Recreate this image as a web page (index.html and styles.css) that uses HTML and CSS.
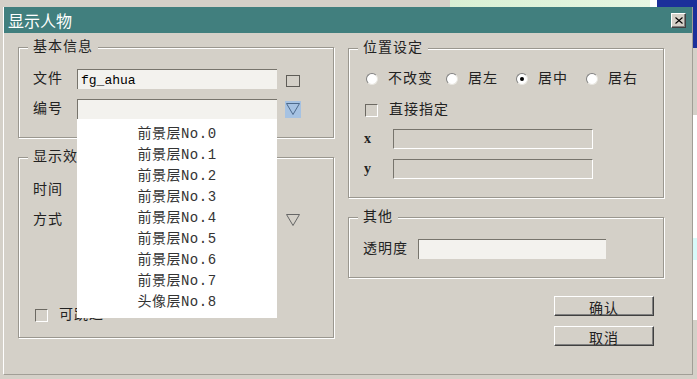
FILE: index.html
```html
<!DOCTYPE html>
<html lang="zh-CN">
<head>
    <meta charset="UTF-8">
    <meta name="viewport" content="width=device-width, initial-scale=1.0">
    <title>显示人物</title>
    <link rel="stylesheet" href="styles.css">
</head>
<body>
    <div class="desk-top"></div>
    <div class="desk-right"></div>

    <div class="dialog">
        <div class="titlebar">
            <span class="title">显示人物</span>
            <button class="close">
                <svg width="8" height="7" viewBox="0 0 8 7"><path d="M0.5 0.5 L7.5 6.5 M7.5 0.5 L0.5 6.5" stroke="#000" stroke-width="1.1" fill="none"/></svg>
            </button>
        </div>

        <div class="panel">
            <div class="col">
                <div class="group basic">
                    <span class="group-title">基本信息</span>
                    <div class="row">
                        <span class="label">文件</span>
                        <div class="field">fg_ahua</div>
                        <span class="browse"></span>
                    </div>
                    <div class="row">
                        <span class="label">编号</span>
                        <div class="field"></div>
                        <span class="drop active">
                            <svg width="14" height="12" viewBox="0 0 14 12"><path d="M0.5 0.5 L13.5 0.5 L7 11.5 Z" stroke="#4d6a8c" fill="none"/></svg>
                        </span>
                    </div>
                    <ul class="dropdown">
                        <li>前景层No.0</li>
                        <li>前景层No.1</li>
                        <li>前景层No.2</li>
                        <li>前景层No.3</li>
                        <li>前景层No.4</li>
                        <li>前景层No.5</li>
                        <li>前景层No.6</li>
                        <li>前景层No.7</li>
                        <li>头像层No.8</li>
                    </ul>
                </div>

                <div class="group effect">
                    <span class="group-title">显示效果</span>
                    <div class="row">
                        <span class="label">时间</span>
                        <div class="field"></div>
                    </div>
                    <div class="row">
                        <span class="label">方式</span>
                        <div class="field"></div>
                        <span class="drop">
                            <svg width="14" height="12" viewBox="0 0 14 12"><path d="M0.5 0.5 L13.5 0.5 L7 11.5 Z" stroke="#666" fill="none"/></svg>
                        </span>
                    </div>
                    <label class="check skip"><span class="box"></span>可跳过</label>
                </div>
            </div>

            <div class="col right">
                <div class="group position">
                    <span class="group-title">位置设定</span>
                    <div class="radios">
                        <label class="radio w80"><span class="dot"></span>不改变</label>
                        <label class="radio w70"><span class="dot"></span>居左</label>
                        <label class="radio w70"><span class="dot on"></span>居中</label>
                        <label class="radio"><span class="dot"></span>居右</label>
                    </div>
                    <label class="check"><span class="box"></span>直接指定</label>
                    <div class="row coord">
                        <span class="label mono">x</span>
                        <div class="field off"></div>
                    </div>
                    <div class="row coord">
                        <span class="label mono">y</span>
                        <div class="field off"></div>
                    </div>
                </div>

                <div class="group other">
                    <span class="group-title">其他</span>
                    <div class="row">
                        <span class="label wide">透明度</span>
                        <div class="field short"></div>
                    </div>
                </div>

                <div class="buttons">
                    <button class="btn">确认</button>
                    <button class="btn">取消</button>
                </div>
            </div>
        </div>
    </div>
</body>
</html>
```

FILE: styles.css
```css
body {
    margin: 0;
    padding: 0;
    width: 697px;
    height: 379px;
    overflow: hidden;
    position: relative;
    background-color: #d4d0c8;
    font-family: "Liberation Mono", "Noto Sans CJK SC", monospace;
    font-size: 14px;
    line-height: 16px;
    color: #222;
}

/* bits of the desktop around the window */
.desk-top {
    position: absolute;
    left: 450px;
    top: 0;
    width: 247px;
    height: 7px;
    background: linear-gradient(to right, #d8f0d4 0, #e6f6e2 200px, #fff 200px, #fff 207px, #1c2f9a 207px);
}

.desk-right {
    position: absolute;
    left: 693px;
    top: 0;
    width: 4px;
    height: 379px;
    background: linear-gradient(to bottom, #1c2f9a 0, #1c2f9a 48px, #d4d0c8 48px, #d4d0c8 115px, #fff 115px, #fff 238px, #d8fafa 238px, #d8fafa 260px, #fff 260px, #fff 320px, #d4d0c8 320px);
}

.dialog {
    position: relative;
    margin: 7px 0 0 3px;
    width: 690px;
    height: 368px;
    box-sizing: border-box;
    border-left: 1px solid #fff;
    border-right: 1px solid #a19e96;
    border-bottom: 1px solid #a19e96;
    background: #d4d0c8;
}

.titlebar {
    height: 26px;
    background: #417f7e;
    display: flex;
    align-items: center;
    justify-content: space-between;
    padding: 0 6px 0 4px;
}

.title {
    color: #fff;
    font-family: "Noto Sans CJK SC", sans-serif;
    font-size: 16px;
    line-height: 18px;
}

.close {
    width: 15px;
    height: 15px;
    padding: 0;
    display: flex;
    align-items: center;
    justify-content: center;
    background: #d4d0c8;
    border: 1px solid;
    border-color: #fff #404040 #404040 #fff;
    box-shadow: inset -1px -1px 0 #808080;
}

.panel {
    display: grid;
    grid-template-columns: 316px 316px;
    column-gap: 14px;
    padding-left: 14px;
}

.col {
    display: flex;
    flex-direction: column;
    gap: 19px;
    padding-top: 14px;
}

.col.right {
    padding-top: 15px;
}

.group {
    position: relative;
    box-sizing: border-box;
    border: 1px solid #9a978f;
    box-shadow: inset 1px 1px 0 #fff, 1px 1px 0 #fff;
    display: flex;
    flex-direction: column;
}

.group-title {
    position: absolute;
    top: -9px;
    left: 9px;
    padding: 0 5px;
    background: #d4d0c8;
    letter-spacing: 1px;
    white-space: nowrap;
}

.basic {
    height: 91px;
    padding: 21px 0 0 14px;
    gap: 10px;
}

.effect {
    height: 181px;
    padding: 22px 0 0 14px;
    gap: 10px;
}

.position {
    height: 150px;
    padding: 22px 0 0 15px;
}

.other {
    height: 61px;
    padding: 21px 0 0 14px;
}

.row {
    display: flex;
    align-items: center;
    height: 20px;
}

.label {
    width: 44px;
    flex: none;
    letter-spacing: 1px;
}

.label.mono {
    width: 29px;
    font-family: "Liberation Serif", serif;
    font-weight: bold;
    font-size: 14px;
}

.label.wide {
    width: 55px;
}

.field {
    width: 200px;
    height: 20px;
    box-sizing: border-box;
    flex: none;
    background: #f3f2ee;
    border-top: 1px solid #77746c;
    border-left: 1px solid #77746c;
    padding: 3px 0 0 3px;
    font-size: 13px;
    color: #000;
}

.field.off {
    background: #d4d0c8;
    border-right: 1px solid #fff;
    border-bottom: 1px solid #fff;
}

.field.short {
    width: 188px;
}

.browse {
    width: 14px;
    height: 12px;
    box-sizing: border-box;
    margin: 3px 0 0 9px;
    border: 1px solid #5e5c57;
}

.drop {
    width: 16px;
    height: 17px;
    margin-left: 8px;
    display: flex;
    align-items: center;
    justify-content: center;
}

.drop.active {
    background: #a6c2e2;
}

.dropdown {
    position: absolute;
    z-index: 10;
    left: 58px;
    top: 71px;
    width: 200px;
    height: 199px;
    box-sizing: border-box;
    margin: 0;
    padding: 5px 0 0;
    list-style: none;
    background: #fff;
}

.dropdown li {
    height: 21px;
    line-height: 21px;
    text-align: center;
    letter-spacing: 0.5px;
    color: #333;
}

.check {
    display: flex;
    align-items: center;
    height: 16px;
    letter-spacing: 1px;
}

.check .box {
    width: 13px;
    height: 13px;
    box-sizing: border-box;
    margin-right: 11px;
    border: 1px solid;
    border-color: #6c6962 #fff #fff #6c6962;
}

.position .check {
    margin: 15px 0 0 1px;
}

.effect .skip {
    margin: auto 0 14px 2px;
}

.radios {
    display: flex;
    height: 16px;
    align-items: center;
    margin-left: 2px;
}

.radio {
    display: flex;
    align-items: center;
    letter-spacing: 1px;
}

.radio.w80 {
    width: 80px;
}

.radio.w70 {
    width: 70px;
}

.dot {
    width: 12px;
    height: 12px;
    box-sizing: border-box;
    margin-right: 10px;
    border-radius: 50%;
    background: #fff;
    border: 1px solid;
    border-color: #808080 #e8e6e0 #e8e6e0 #808080;
    display: flex;
    align-items: center;
    justify-content: center;
}

.dot.on::after {
    content: "";
    width: 4px;
    height: 4px;
    border-radius: 50%;
    background: #000;
}

.coord {
    margin-top: 11px;
}

.coord + .coord {
    margin-top: 10px;
}

.buttons {
    display: flex;
    flex-direction: column;
    gap: 10px;
    padding-left: 206px;
    margin-top: -1px;
}

.btn {
    width: 100px;
    height: 20px;
    padding: 0;
    background: #d4d0c8;
    border: 1px solid;
    border-color: #fff #404040 #404040 #fff;
    box-shadow: inset -1px -1px 0 #808080;
    font-family: "Noto Sans CJK SC", sans-serif;
    font-size: 14px;
    letter-spacing: 1px;
    color: #222;
}
```
